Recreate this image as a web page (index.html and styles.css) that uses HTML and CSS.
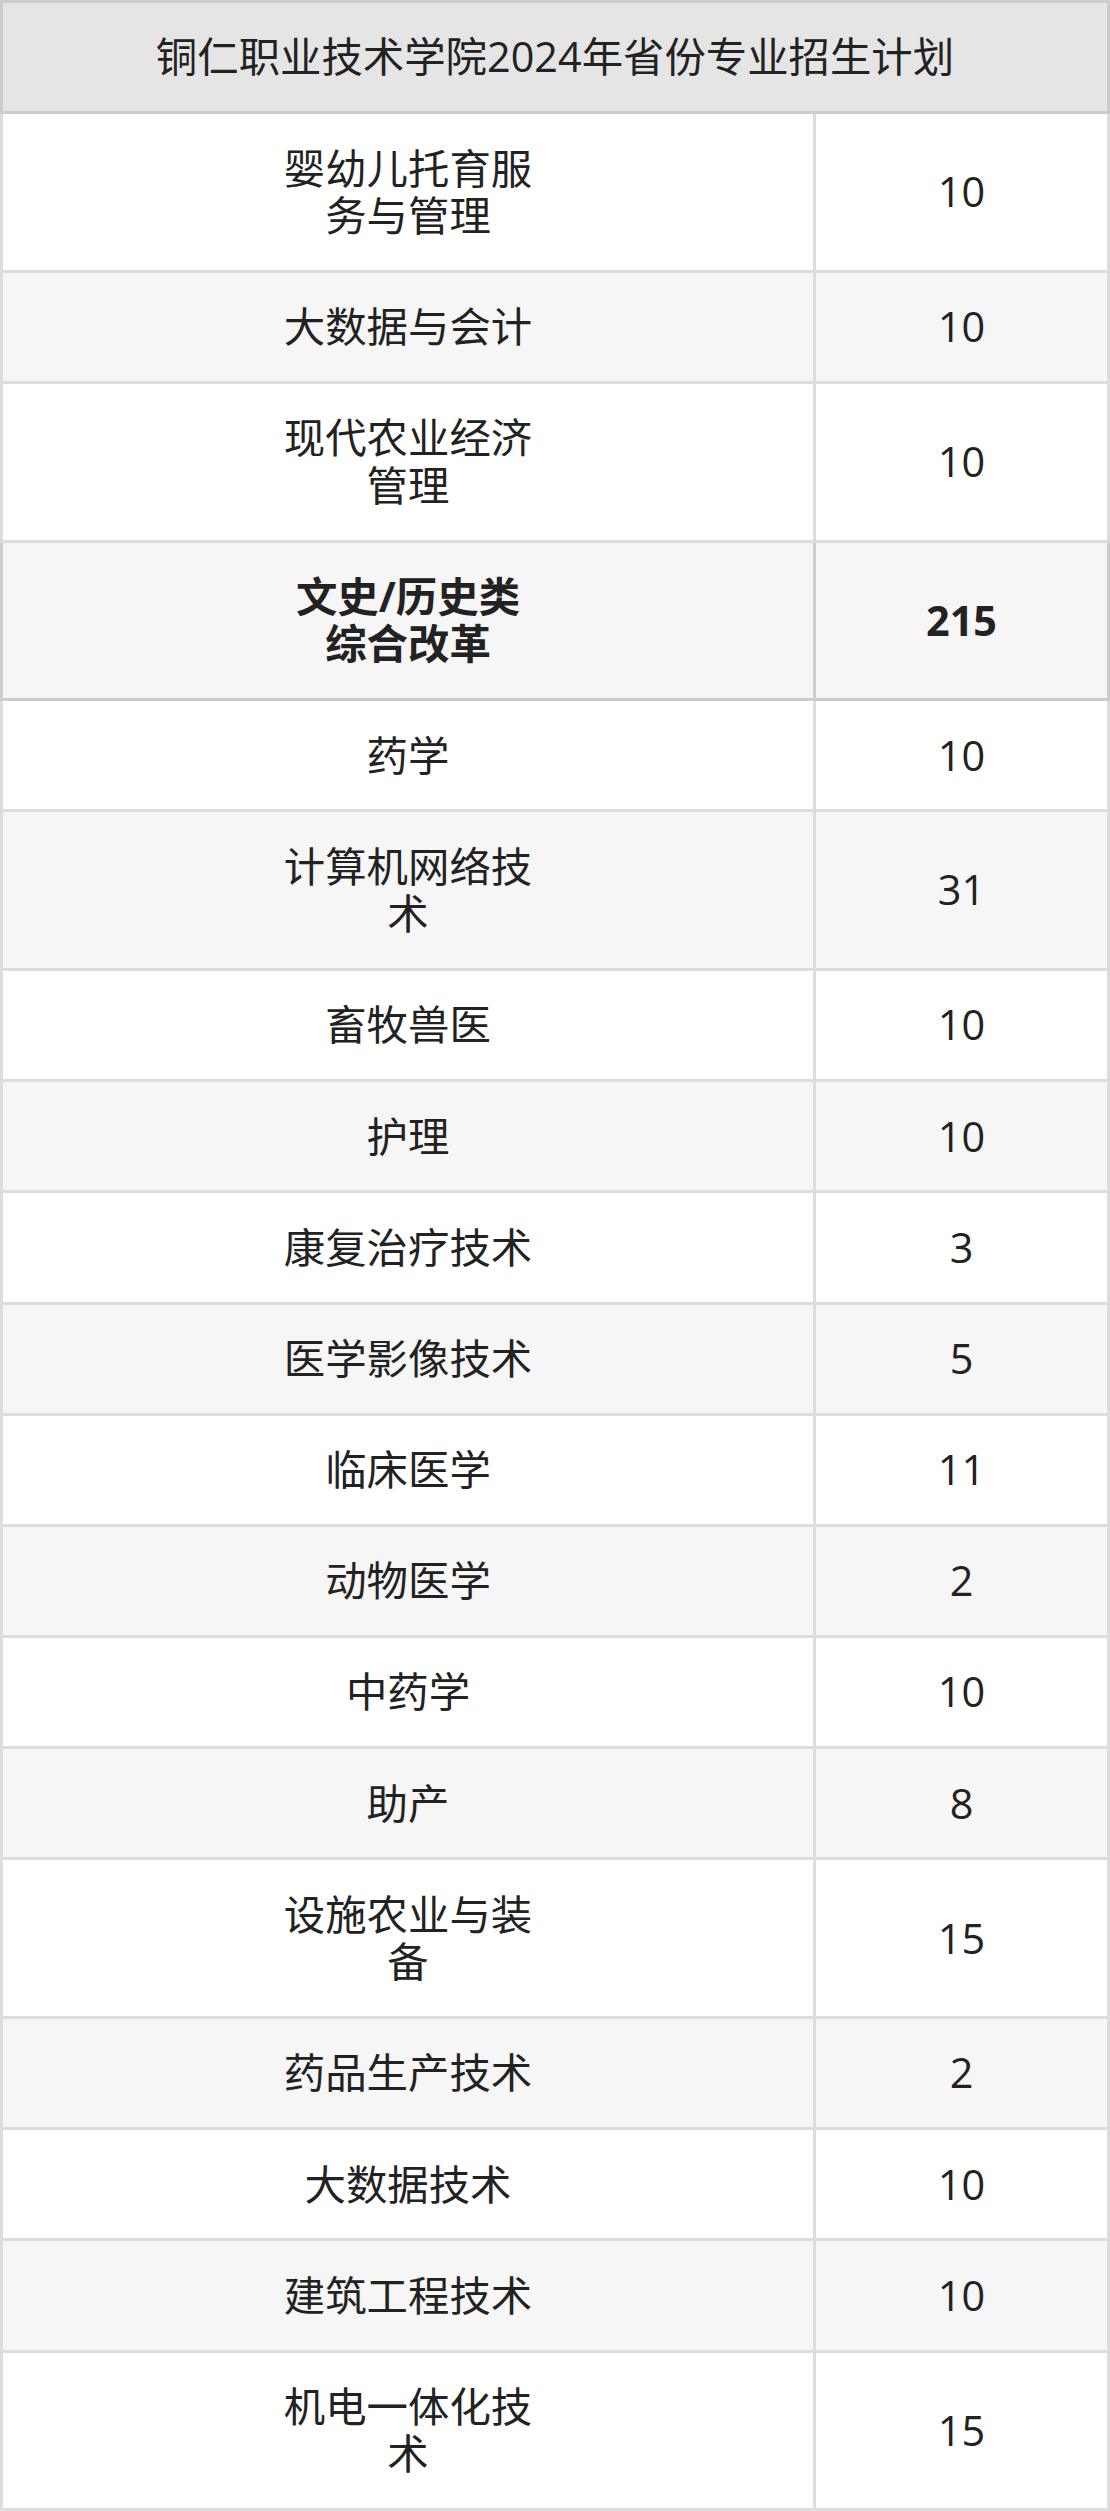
FILE: index.html
```html
<!DOCTYPE html>
<html lang="zh-CN">
<head>
<meta charset="utf-8">
<title>铜仁职业技术学院2024年省份专业招生计划</title>
<link rel="stylesheet" href="styles.css">
</head>
<body>
<div class="plan">
  <div class="head">铜仁职业技术学院2024年省份专业招生计划</div>
  <div class="row"><div class="cell name"><span>婴幼儿托育服务与管理</span></div><div class="cell num">10</div></div>
  <div class="row alt"><div class="cell name"><span>大数据与会计</span></div><div class="cell num">10</div></div>
  <div class="row"><div class="cell name"><span>现代农业经济管理</span></div><div class="cell num">10</div></div>
  <div class="row alt group"><div class="cell name"><span>文史/历史类综合改革</span></div><div class="cell num">215</div></div>
  <div class="row"><div class="cell name"><span>药学</span></div><div class="cell num">10</div></div>
  <div class="row alt"><div class="cell name"><span>计算机网络技术</span></div><div class="cell num">31</div></div>
  <div class="row"><div class="cell name"><span>畜牧兽医</span></div><div class="cell num">10</div></div>
  <div class="row alt"><div class="cell name"><span>护理</span></div><div class="cell num">10</div></div>
  <div class="row"><div class="cell name"><span>康复治疗技术</span></div><div class="cell num">3</div></div>
  <div class="row alt"><div class="cell name"><span>医学影像技术</span></div><div class="cell num">5</div></div>
  <div class="row"><div class="cell name"><span>临床医学</span></div><div class="cell num">11</div></div>
  <div class="row alt"><div class="cell name"><span>动物医学</span></div><div class="cell num">2</div></div>
  <div class="row"><div class="cell name"><span>中药学</span></div><div class="cell num">10</div></div>
  <div class="row alt"><div class="cell name"><span>助产</span></div><div class="cell num">8</div></div>
  <div class="row"><div class="cell name"><span>设施农业与装备</span></div><div class="cell num">15</div></div>
  <div class="row alt"><div class="cell name"><span>药品生产技术</span></div><div class="cell num">2</div></div>
  <div class="row"><div class="cell name"><span>大数据技术</span></div><div class="cell num">10</div></div>
  <div class="row alt"><div class="cell name"><span>建筑工程技术</span></div><div class="cell num">10</div></div>
  <div class="row"><div class="cell name"><span>机电一体化技术</span></div><div class="cell num">15</div></div>
</div>
</body>
</html>
```

FILE: styles.css
```css
html, body {
  margin: 0;
  padding: 0;
  background: #ffffff;
}

.plan {
  width: 1110px;
  font-family: "Open Sans", "Noto Sans CJK SC", sans-serif;
  font-size: 41.4px;
  line-height: 47.4px;
  color: #222222;
}

.head {
  box-sizing: border-box;
  background: #e5e5e5;
  border: 3px solid #cccccc;
  padding: 30.4px 10px;
  text-align: center;
}

.row {
  display: grid;
  grid-template-columns: 816px 1fr;
  background: #ffffff;
}

.row.alt {
  background: #f6f6f6;
}

.cell {
  box-sizing: border-box;
  display: flex;
  align-items: center;
  justify-content: center;
  text-align: center;
  padding: 30.4px 10px;
  border-bottom: 3px solid #dddddd;
  border-right: 3px solid #dddddd;
}

.cell.name {
  border-left: 3px solid #dddddd;
}

.cell.name span {
  display: inline-block;
  max-width: 256px;
}

.row.group .cell {
  font-weight: 700;
  border-color: #cccccc;
}
```
